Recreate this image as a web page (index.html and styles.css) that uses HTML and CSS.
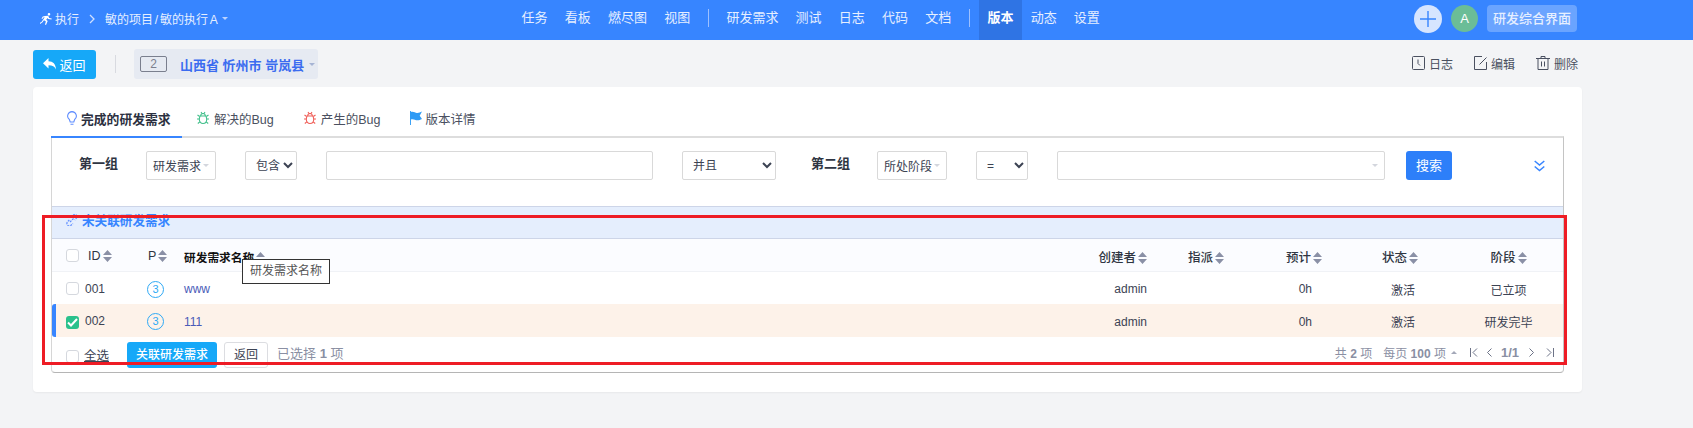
FILE: index.html
```html
<!DOCTYPE html>
<html lang="zh-CN">
<head>
  <meta charset="UTF-8">
  <title>版本 - 关联研发需求</title>
  <link rel="stylesheet" href="styles.css">
</head>
<body>
  <svg class="sprite" width="0" height="0">
    <symbol id="sort" viewBox="0 0 9 12"><path d="M4.500 0 9 5H0zM0 7h9l-4.500 5z"/></symbol>
    <symbol id="bug" viewBox="0 0 14 14"><g fill="none" stroke="currentColor" stroke-width="1.100"><path d="M4.200 5h5.600c.6 1 .9 2 .9 3.200 0 2.500-1.600 4.300-3.700 4.300s-3.700-1.800-3.700-4.300C3.300 7 3.600 6 4.200 5z"/><path d="M4.700 5c0-1.500 1-2.500 2.300-2.500s2.300 1 2.300 2.500M5 1l1 1.500M9 1 8 2.500M3.300 8H1M10.700 8H13M3.700 5.500 1.500 4M10.300 5.500 12.500 4M3.800 10.800l-2 1.700M10.200 10.800l2 1.700"/></g></symbol>
  </svg>

  <header class="topbar">
    <div class="crumbs">
      <svg class="run-icon" width="12" height="12" viewBox="0 0 12 12"><path fill="#fff" d="M9 0a1.300 1.300 0 1 1 0 2.600A1.300 1.300 0 0 1 9 0zM5 3l3.200-.2 1 2.300 2.500.4-.2 1-3.200-.5-.7-1-1.400 1.800 1.500 1.200L6 12l-1-.4.900-3L4 7.300 2.300 9.600 0 11l-.2-1 1.700-1.100L4.700 4.300 3.400 4.500 2.300 6l-.8-.6 1.300-2z"/></svg>
      <span>执行</span>
      <svg class="crumb-sep" width="7" height="10" viewBox="0 0 7 10"><path fill="none" stroke="#cfe0ff" stroke-width="1.300" d="m1 1 4 4-4 4"/></svg>
      <span class="crumb-path">敏的项目 / 敏的执行 A</span>
      <i class="caret caret-light"></i>
    </div>
    <nav class="mainnav">
      <a>任务</a><a>看板</a><a>燃尽图</a><a>视图</a>
      <b class="nav-sep"></b>
      <a>研发需求</a><a>测试</a><a>日志</a><a>代码</a><a>文档</a>
      <b class="nav-sep"></b>
      <a class="active">版本</a><a>动态</a><a>设置</a>
    </nav>
    <div class="top-right">
      <span class="plus-btn"><svg width="16" height="16" viewBox="0 0 16 16"><path stroke="#3785ff" stroke-width="1.400" d="M8 0v16M0 8h16"/></svg></span>
      <span class="avatar">A</span>
      <span class="switch-btn">研发综合界面</span>
    </div>
  </header>

  <main class="page">
    <div class="subbar">
      <a class="back-btn">
        <svg width="13" height="12" viewBox="0 0 13 12"><path fill="#fff" d="M5.500 0v3.200c4.500 0 7.300 2.800 7.500 8.300-1.300-3-3.500-4.300-7.500-4.300v3.300L0 5.200z"/></svg>
        返回
      </a>
      <b class="sub-sep"></b>
      <div class="release-chip">
        <span class="num-badge">2</span>
        <strong>山西省 忻州市 岢岚县</strong>
        <i class="caret"></i>
      </div>
      <div class="actions">
        <a><svg width="13" height="14" viewBox="0 0 13 14"><g fill="none" stroke="#4a5060"><rect x=".5" y=".5" width="12" height="13" rx="1"/><path d="M6 3.500v4l2 2"/></g></svg>日志</a>
        <a><svg width="13" height="14" viewBox="0 0 13 14"><g fill="none" stroke="#4a5060"><path d="M8 .5H.5v13h12V6"/><path d="m5.500 8.500 7-7"/></g></svg>编辑</a>
        <a><svg width="14" height="14" viewBox="0 0 14 14"><g fill="none" stroke="#4a5060"><path d="M0 2.500h14M5 2.500V.5h4v2M2 2.500v11h10v-11M5.500 5.500v5M8.500 5.500v5"/></g></svg>删除</a>
      </div>
    </div>

    <section class="card">
      <div class="tabs">
        <a class="tab active">
          <svg width="10" height="14" viewBox="0 0 10 14"><path fill="none" stroke="#5f8dff" stroke-width="1.100" d="M5 .6a4.400 4.400 0 0 1 2.600 7.900L6.800 11H3.200l-.8-2.500A4.400 4.400 0 0 1 5 .6zM3.500 13.300h3"/></svg>
          完成的研发需求
        </a>
        <a class="tab"><svg class="bug-green" width="14" height="14"><use href="#bug"/></svg>解决的Bug</a>
        <a class="tab"><svg class="bug-red" width="14" height="14"><use href="#bug"/></svg>产生的Bug</a>
        <a class="tab"><svg width="12" height="14" viewBox="0 0 13 15"><path fill="#2e9bf5" d="M0 0h1v15H0zM1 1c3-1 5 1.500 7 1 2-.2 3-.6 5-1.500L10.500 5 13 8.500c-2 .8-3 1.500-5 1.500-2.500 0-4-2-7-1z"/></svg>版本详情</a>
      </div>

      <div class="tab-box">
        <form class="filter">
          <strong class="group-name">第一组</strong>
          <div class="picker w-70">研发需求<i class="caret caret-pale"></i></div>
          <select class="w-52"><option>包含</option></select>
          <input class="w-327" type="text">
          <select class="w-94"><option>并且</option></select>
          <strong class="group-name group-two">第二组</strong>
          <div class="picker w-70 tight">所处阶段<i class="caret caret-pale"></i></div>
          <select class="w-52"><option>=</option></select>
          <div class="picker w-328"><i class="caret caret-pale"></i></div>
          <a class="search-btn">搜索</a>
          <svg class="more" width="11" height="12" viewBox="0 0 11 12"><path fill="none" stroke="#3785ff" stroke-width="1.500" d="m.7 1 4.800 4 4.800-4M.7 6.500l4.800 4 4.800-4"/></svg>
        </form>

        <div class="strip">
          <svg width="12" height="12" viewBox="0 0 12 12"><path fill="none" stroke="#5f8dff" stroke-width="1.200" stroke-dasharray="2 1" d="M5 2.500 7 .8a2.400 2.400 0 0 1 3.400 3.400L8.700 6M3.300 6 1.600 7.800A2.400 2.400 0 0 0 5 11.200L7 9.500M4 8l4-4"/></svg>
          未关联研发需求
        </div>

        <table class="stories">
          <colgroup>
            <col class="c-id"><col class="c-pri"><col class="c-name"><col class="c-user"><col class="c-assign"><col class="c-est"><col class="c-status"><col class="c-stage">
          </colgroup>
          <thead>
            <tr>
              <th><span class="check"></span><span class="id-head">ID</span><svg class="sort"><use href="#sort"/></svg></th>
              <th>P<svg class="sort"><use href="#sort"/></svg></th>
              <th class="name-head">研发需求名称<svg class="sort"><use href="#sort"/></svg>
                <span class="tooltip">研发需求名称</span>
              </th>
              <th class="right">创建者<svg class="sort"><use href="#sort"/></svg></th>
              <th class="assign">指派<svg class="sort"><use href="#sort"/></svg></th>
              <th class="right">预计<svg class="sort"><use href="#sort"/></svg></th>
              <th class="status">状态<svg class="sort"><use href="#sort"/></svg></th>
              <th class="center">阶段<svg class="sort"><use href="#sort"/></svg></th>
            </tr>
          </thead>
          <tbody>
            <tr>
              <td><span class="check"></span><span class="row-id">001</span></td>
              <td><span class="pri">3</span></td>
              <td><a class="story">www</a></td>
              <td class="right">admin</td>
              <td></td>
              <td class="right est">0h</td>
              <td class="status-val">激活</td>
              <td class="center">已立项</td>
            </tr>
            <tr class="picked">
              <td><span class="check on"><svg width="11" height="9" viewBox="0 0 11 9"><path fill="none" stroke="#fff" stroke-width="2" d="m1 4.500 3 3 6-6.500"/></svg></span><span class="row-id">002</span></td>
              <td><span class="pri">3</span></td>
              <td><a class="story">111</a></td>
              <td class="right">admin</td>
              <td></td>
              <td class="right est">0h</td>
              <td class="status-val">激活</td>
              <td class="center">研发完毕</td>
            </tr>
          </tbody>
        </table>

        <div class="foot">
          <span class="check"></span>
          <span class="select-all">全选</span>
          <a class="link-btn">关联研发需求</a>
          <a class="plain-btn">返回</a>
          <span class="picked-count">已选择 <b>1</b> 项</span>
          <div class="pager">
            <span>共 <b>2</b> 项</span>
            <span>每页 <b>100</b> 项</span>
            <i class="caret caret-up"></i>
            <svg class="first" width="8" height="9" viewBox="0 0 8 9"><path fill="none" stroke="#6d7387" d="M.5 0v9M7 .5 3 4.500l4 4"/></svg>
            <svg class="prev" width="5" height="9" viewBox="0 0 5 9"><path fill="none" stroke="#6d7387" d="M4.500.5l-4 4 4 4"/></svg>
            <b class="page-no">1/1</b>
            <svg class="next" width="5" height="9" viewBox="0 0 5 9"><path fill="none" stroke="#6d7387" d="m.5.500 4 4-4 4"/></svg>
            <svg class="last" width="8" height="9" viewBox="0 0 8 9"><path fill="none" stroke="#6d7387" d="M7.500 0v9M1 .5l4 4-4 4"/></svg>
          </div>
        </div>
      </div>
    </section>
  </main>

  <div class="red-mark"></div>
</body>
</html>
```

FILE: styles.css
```css
* {
  box-sizing: border-box;
}
html, body {
  margin: 0;
  height: 428px;
  overflow: hidden;
}
body {
  background: #f3f4f6;
  color: #3c4353;
  font-family: "Liberation Sans", "Noto Sans CJK SC", sans-serif;
  font-size: 13px;
}
.sprite {
  position: absolute;
}
a {
  cursor: pointer;
}

.caret {
  display: inline-block;
  width: 0;
  height: 0;
  border-left: 3px solid transparent;
  border-right: 3px solid transparent;
  border-top: 3px solid #a6b4d4;
}
.caret-light {
  border-top-color: #bcd3ff;
}
.caret-pale {
  border-top-color: #d3d6dd;
}
.caret-up {
  border-top: 0;
  border-bottom: 3px solid #a3a8b8;
}

/* top bar */
.topbar {
  display: flex;
  align-items: center;
  height: 40px;
  background: #3785ff;
  color: #e6efff;
}
.crumbs {
  display: flex;
  align-items: center;
  width: 522px;
  padding: 0 0 3px 40px;
}
.crumbs span {
  font-size: 12px;
}
.crumb-path {
  word-spacing: -1.500px;
}
.run-icon {
  margin-right: 3px;
}
.crumb-sep {
  margin: 0 9px 0 10px;
}
.crumbs .caret {
  margin-left: 4px;
}
.mainnav {
  display: flex;
  align-items: stretch;
  height: 40px;
  margin-left: -9px;
  width: 901px;
}
.mainnav a {
  display: flex;
  align-items: center;
  padding: 0 8.600px 8px;
}
.mainnav a.active {
  background: #2f74e4;
  color: #fff;
  font-weight: bold;
}
.nav-sep {
  width: 1px;
  height: 18px;
  margin: 9px 9px 0;
  background: #9dc0ff;
}
.top-right {
  display: flex;
  align-items: center;
  gap: 9px;
  padding-bottom: 3px;
}
.plus-btn {
  display: flex;
  align-items: center;
  justify-content: center;
  width: 28px;
  height: 28px;
  border-radius: 50%;
  background: #d6e5ff;
}
.avatar {
  width: 27px;
  height: 27px;
  border-radius: 50%;
  background: #6bbd97;
  color: #fff;
  line-height: 27px;
  text-align: center;
}
.switch-btn {
  width: 90px;
  height: 27px;
  border-radius: 4px;
  background: #6aa4ff;
  line-height: 27px;
  text-align: center;
  font-size: 13px;
  font-weight: 500;
}

/* page */
.page {
  padding: 0 111px 0 33px;
}
.subbar {
  display: flex;
  align-items: center;
  height: 47px;
  padding-top: 1px;
}
.back-btn {
  display: flex;
  align-items: center;
  justify-content: center;
  gap: 3px;
  width: 63px;
  height: 29px;
  border-radius: 3px;
  background: #16a8f8;
  color: #fff;
}
.sub-sep {
  width: 1px;
  height: 18px;
  margin: 0 18px 0 19px;
  background: #d8dae0;
}
.release-chip {
  display: flex;
  align-items: center;
  width: 184px;
  height: 30px;
  padding-left: 6px;
  border-radius: 3px;
  background: #e6eaf2;
}
.num-badge {
  width: 27px;
  height: 16px;
  margin-right: 13px;
  border: 1px solid #7a7f8e;
  border-radius: 2px;
  color: #7a7f8e;
  font-size: 12px;
  line-height: 14px;
  text-align: center;
}
.release-chip strong {
  color: #3b6cf0;
  white-space: nowrap;
}
.release-chip .caret {
  margin-left: 5px;
}
.actions {
  display: flex;
  margin: -2px 4px 0 auto;
  gap: 21px;
}
.actions a {
  display: flex;
  align-items: center;
  gap: 4px;
  color: #4a5060;
  font-size: 12px;
}

/* card with tabs */
.card {
  height: 305px;
  padding: 17px 18px 0;
  border-radius: 4px;
  background: #fff;
  box-shadow: 0 1px 2px rgba(0, 0, 0, 0.05);
}
.tabs {
  display: flex;
  height: 32px;
}
.tab {
  display: flex;
  align-items: center;
  gap: 4px;
  padding: 0 14.500px 4px;
  height: 32px;
  color: #4a5060;
  font-size: 12.500px;
}
.tab svg {
  flex: none;
}
.tab.active {
  width: 131px;
  margin-right: -0.500px;
  padding: 0 0 4px 16px;
  color: #2b3040;
  font-size: 12.800px;
  font-weight: bold;
  border-bottom: 2px solid #3785ff;
  position: relative;
  z-index: 1;
  height: 34px;
  white-space: nowrap;
}
.bug-green {
  color: #43c08c;
}
.bug-red {
  color: #f0605a;
}
.tab-box {
  height: 237px;
  border: 1px solid #d6d6d6;
  border-top: 2px solid #dddddd;
  border-right-color: #c4c4c4;
  border-bottom-color: #b5b5b5;
  border-radius: 0 0 4px 4px;
}

/* search form */
.filter {
  display: flex;
  align-items: flex-start;
  gap: 29px;
  height: 68px;
  padding: 13px 0 0 27px;
}
.group-name {
  line-height: 25px;
  width: 38px;
  white-space: nowrap;
  color: #2f3542;
}
.group-two {
  margin-left: 6px;
  margin-right: -1px;
}
.filter select,
.filter input,
.picker {
  height: 29px;
  border: 1px solid #d9d9d9;
  border-radius: 2px;
  background-color: #fff;
  font-family: inherit;
  font-size: 12px;
  color: #3c4353;
}
.filter select {
  padding-left: 6px;
}
.picker {
  display: flex;
  align-items: center;
  justify-content: space-between;
  padding: 0 6px;
  white-space: nowrap;
  flex: none;
}
.w-328 {
  justify-content: flex-end;
}
.w-70 { width: 70px; }
.w-52 { width: 52px; }
.w-94 { width: 94px; }
.w-327 { width: 327px; }
.w-328 { width: 328px; }
.search-btn {
  flex: none;
  width: 46px;
  height: 29px;
  margin-left: -8px;
  border-radius: 3px;
  background: #2d7ff9;
  color: #fff;
  line-height: 29px;
  text-align: center;
}
.more {
  flex: none;
  margin: 9px 0 0 53px;
}
.strip {
  display: flex;
  align-items: center;
  gap: 4px;
  height: 33px;
  padding: 0 0 6px 14px;
  border-top: 1px solid #cdd5e8;
  border-bottom: 1px solid #cdd5e8;
  background: #e5eefd;
  color: #3785ff;
  font-size: 12.600px;
  font-weight: bold;
}

/* table */
.stories {
  width: 100%;
  table-layout: fixed;
  border-collapse: separate;
  border-spacing: 0;
}
.c-id { width: 96px; }
.c-pri { width: 36px; }
.c-user { width: 87px; }
.c-assign { width: 83px; }
.c-est { width: 92px; }
.c-status { width: 132px; }
.c-stage { width: 109px; }
.stories th {
  height: 33px;
  padding: 2px 0 0;
  background: #fbfcff;
  border-bottom: 1px solid #f0f2f6;
  color: #2f3542;
  font-size: 12.500px;
  font-weight: 500;
  text-align: left;
  white-space: nowrap;
}
.stories th:first-child,
.stories td:first-child {
  padding-left: 14px;
}
.stories td {
  height: 32px;
  padding: 2px 0 0;
  font-size: 12px;
}
.stories .right {
  text-align: right;
}
.stories .center {
  text-align: center;
}
.stories .assign {
  padding-left: 41px;
}
.stories .est {
  padding-right: 10px;
}
.stories .status {
  padding-left: 60px;
}
.stories .status-val {
  padding-left: 69px;
}
.name-head {
  position: relative;
}
.stories .name-head {
  color: #111;
  font-size: 11.700px;
  font-weight: bold;
}
.tooltip {
  position: absolute;
  left: 58px;
  top: 20px;
  z-index: 2;
  width: 88px;
  height: 25px;
  border: 1px solid #333;
  background: #fff;
  color: #555;
  font-size: 12px;
  font-weight: normal;
  line-height: 23px;
  text-align: center;
}
.sort {
  width: 9px;
  height: 12px;
  margin-left: 2px;
  vertical-align: -2px;
  fill: #8a90a6;
}
.check {
  display: inline-flex;
  align-items: center;
  justify-content: center;
  width: 13px;
  height: 13px;
  border: 1px solid #d5d8de;
  border-radius: 3px;
  background: #fff;
  vertical-align: -2px;
}
.check.on {
  border: 0;
  background: #2ac18c;
}
.id-head {
  margin-left: 9px;
}
.row-id {
  margin-left: 6px;
}
.pri {
  display: block;
  width: 17px;
  height: 17px;
  margin-left: -1px;
  border: 1px solid #2fa9f5;
  border-radius: 50%;
  color: #2fa9f5;
  font-size: 11px;
  line-height: 15px;
  text-align: center;
}
.story {
  color: #4a5bb8;
}
.picked td {
  height: 33px;
  background: #fdf2e9;
}
.stories .picked td:first-child {
  padding-left: 10px;
  border-left: 4px solid #3785ff;
  border-radius: 3px 0 0 3px;
}

/* footer */
.foot {
  display: flex;
  align-items: center;
  height: 35px;
  padding: 0 9px 5px 14px;
  font-size: 12px;
}
.foot .check {
  margin-top: 8px;
}
.select-all {
  margin: 5px 0 0 5px;
  text-decoration: underline;
  font-size: 12.500px;
}
.link-btn {
  width: 90px;
  height: 26px;
  margin-left: 18px;
  margin-top: 5px;
  border-radius: 3px;
  background: #16a8f8;
  color: #fff;
  font-weight: 500;
  line-height: 26px;
  text-align: center;
}
.plain-btn {
  width: 44px;
  height: 26px;
  margin-left: 7px;
  margin-top: 5px;
  border: 1px solid #dcdde1;
  border-radius: 3px;
  line-height: 24px;
  text-align: center;
}
.picked-count {
  margin-left: 9px;
  color: #8a8fa3;
  font-size: 13px;
}
.pager {
  display: flex;
  align-items: center;
  margin-left: auto;
  color: #8a8fa3;
  font-size: 12px;
}
.pager span {
  margin-right: 11px;
}
.pager .caret-up {
  margin: 0 13px 0 -6px;
}
.pager .prev {
  margin: 0 9px 0 9px;
}
.pager .next {
  margin: 0 12px 0 10px;
}
.page-no {
  font-size: 13px;
}

/* red annotation drawn over the screenshot */
.red-mark {
  position: absolute;
  left: 42px;
  top: 215px;
  width: 1525px;
  height: 150px;
  border: 3px solid #ee1c25;
}
```
